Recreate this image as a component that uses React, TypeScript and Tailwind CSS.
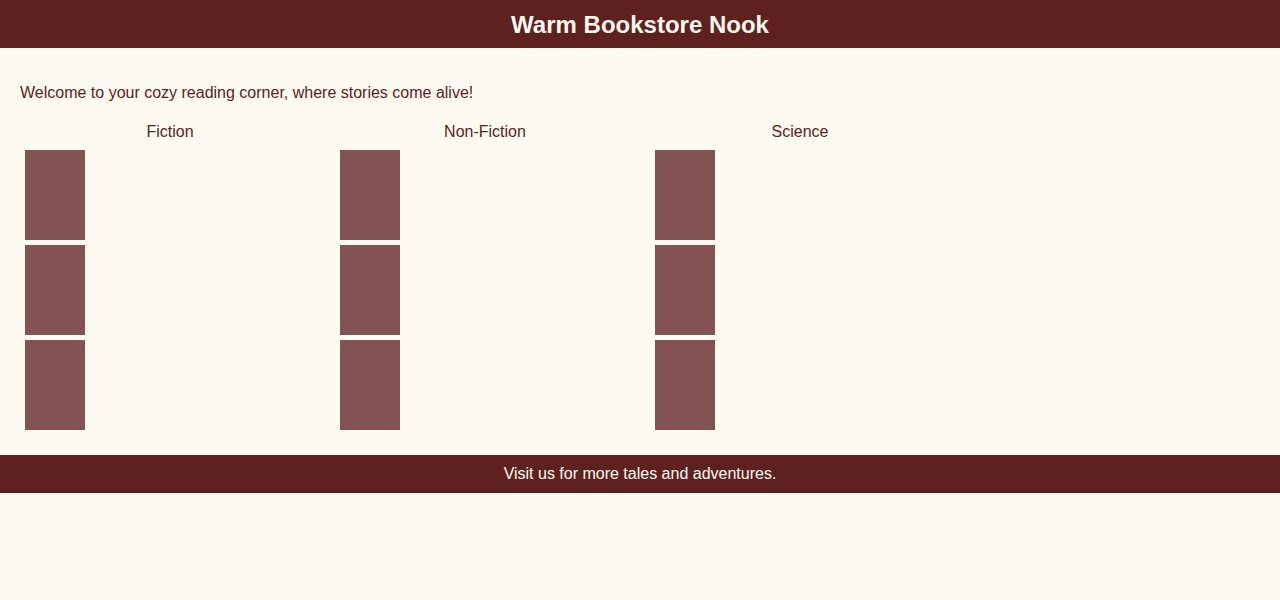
import React from "react";

const columns = ["Fiction", "Non-Fiction", "Science"];

export default function App() {
  return (
    <div className="min-h-[600px] bg-[#fdfaf2] font-['Liberation_Sans',Arial,sans-serif] text-[#5f2120]">
      <header className="h-[48px] bg-[#5f2120] flex items-center justify-center">
        <h1 className="mt-[2px] text-[24px] leading-[28px] font-bold text-[#fdf9f0]">Warm Bookstore Nook</h1>
      </header>
      <main className="px-[20px]">
        <p className="pt-[36px] text-[16px] leading-[18px]">
          Welcome to your cozy reading corner, where stories come alive!
        </p>
        <div className="mt-[21px] flex gap-[15px]">
          {columns.map((c) => (
            <div key={c} className="w-[300px] flex flex-col">
              <div className="text-center text-[16px] leading-[18px]">{c}</div>
              <div className="mt-[9px] flex flex-col gap-[5px] pl-[5px]">
                <div className="w-[60px] h-[90px] bg-[#835252]" />
                <div className="w-[60px] h-[90px] bg-[#835252]" />
                <div className="w-[60px] h-[90px] bg-[#835252]" />
              </div>
            </div>
          ))}
        </div>
      </main>
      <footer className="mt-[25px] h-[38px] bg-[#5f2120] flex items-center justify-center text-[16px] leading-[18px] text-[#fdf9f0]">
        Visit us for more tales and adventures.
      </footer>
    </div>
  );
}
